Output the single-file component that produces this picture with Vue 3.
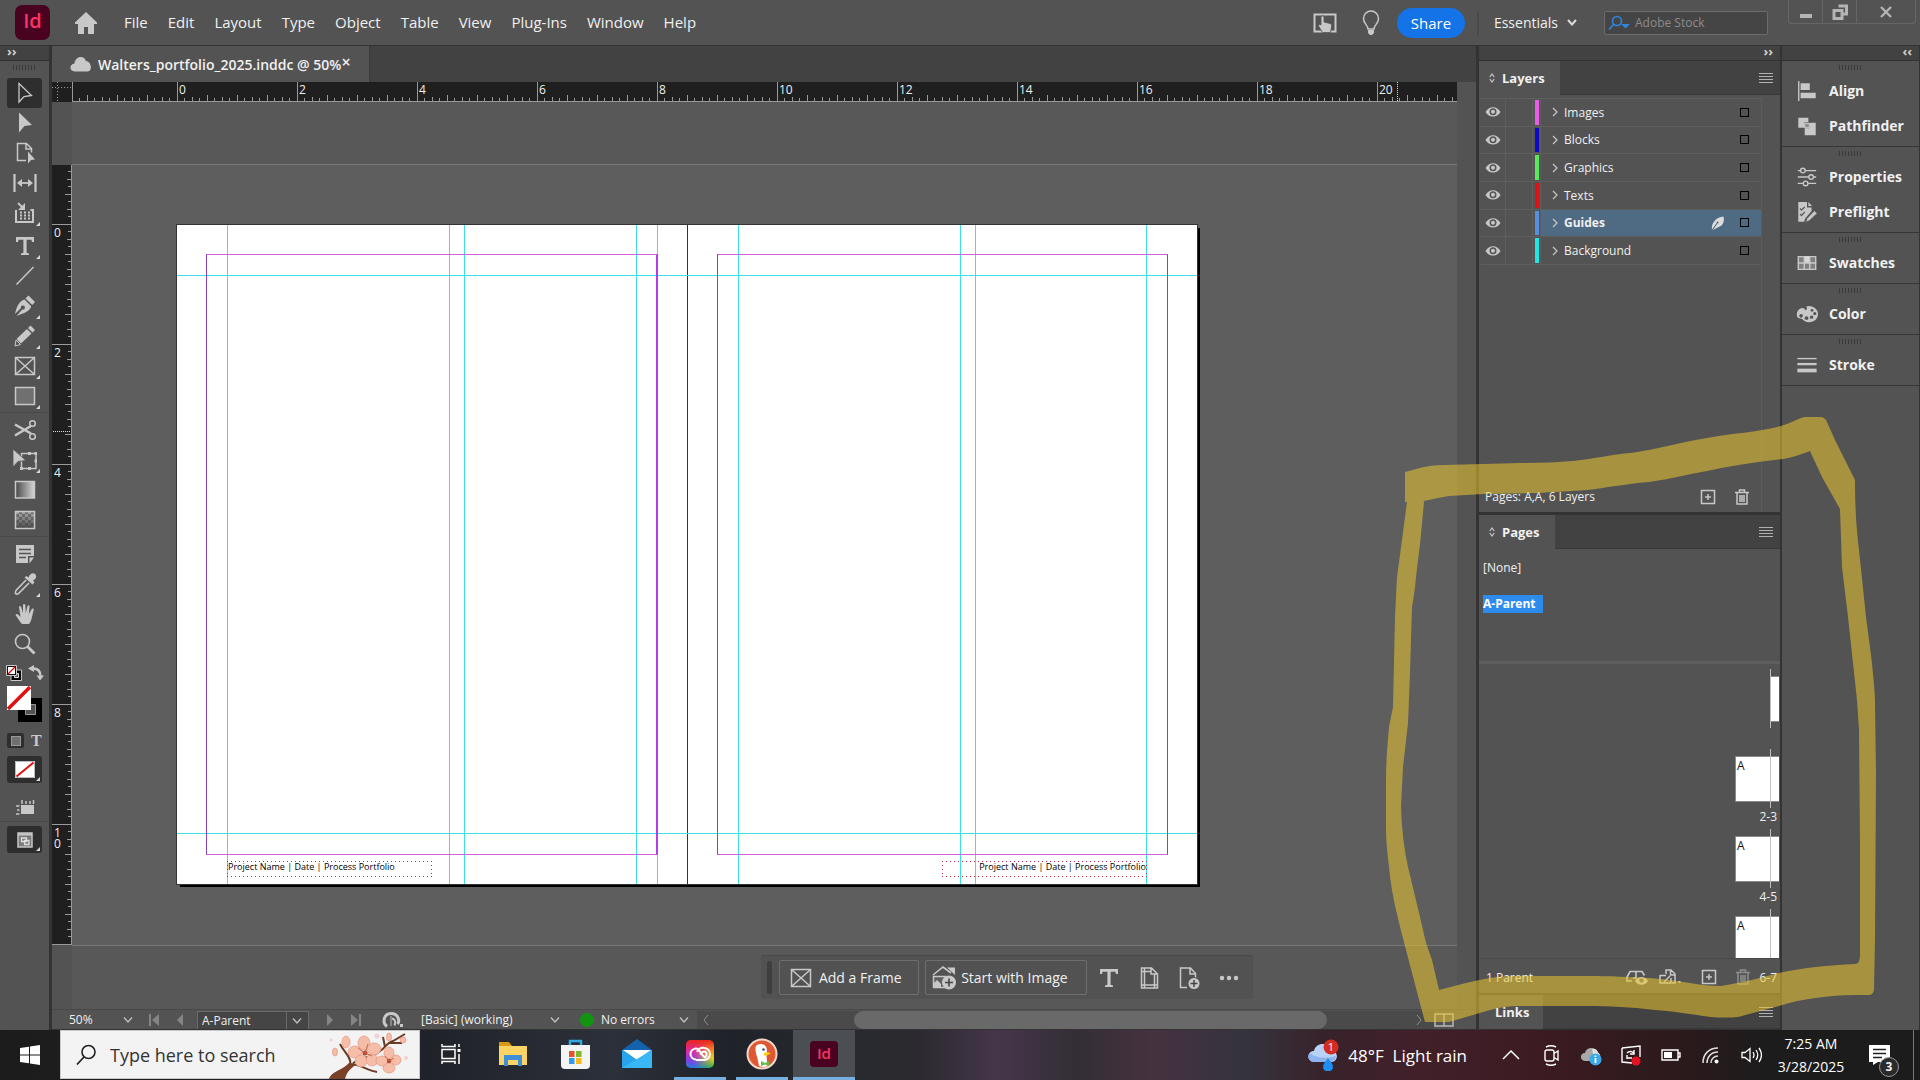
<template>
  <div class="app">
    <header class="menubar">
      <div class="id-logo">Id</div>
      <button class="plain home" aria-label="Home">
        <svg width="22" height="22" viewBox="0 0 22 22" v-html="icons.home"></svg>
      </button>
      <nav class="menus">
        <button v-for="m in menus" :key="m" class="plain">{{ m }}</button>
      </nav>
      <div class="menubar-right">
        <button class="plain" aria-label="Touch workspace">
          <svg width="24" height="22" viewBox="0 0 24 22" v-html="icons.touch"></svg>
        </button>
        <button class="plain bulb" aria-label="Learn">
          <svg width="18" height="26" viewBox="0 0 18 26" v-html="icons.bulb"></svg>
        </button>
        <button class="share">Share</button>
        <button class="plain essentials">
          Essentials
          <svg width="10" height="7" viewBox="0 0 10 7" v-html="icons.chevBold"></svg>
        </button>
        <label class="stock">
          <svg width="22" height="16" viewBox="0 0 22 16" v-html="icons.stockSearch"></svg>
          <input type="text" placeholder="Adobe Stock" aria-label="Adobe Stock" />
        </label>
        <div class="win-buttons">
          <button class="plain" aria-label="Minimize">
            <svg width="16" height="18" viewBox="0 0 16 18"><rect x="2" y="11" width="12" height="4" fill="#b4b4b4" /></svg>
          </button>
          <button class="plain" aria-label="Restore">
            <svg width="18" height="18" viewBox="0 0 18 18" v-html="icons.restore"></svg>
          </button>
          <button class="plain" aria-label="Close">
            <svg width="14" height="14" viewBox="0 0 14 14"><path d="M2 2l10 10M12 2L2 12" stroke="#b4b4b4" stroke-width="2.4" /></svg>
          </button>
        </div>
      </div>
    </header>

    <main class="workspace">
      <aside class="toolbar">
        <div class="dock-head left"><span>››</span></div>
        <div class="grip"></div>
        <div v-for="(group, gi) in toolGroups" :key="gi" class="tool-group" :class="{ line: gi > 1 }">
          <button v-for="t in group" :key="t.icon" class="tool" :class="{ active: t.active }" :aria-label="t.label">
            <svg width="24" height="24" viewBox="0 0 24 24" v-html="icons[t.icon]"></svg>
            <i v-if="t.more" class="more"></i>
          </button>
        </div>
        <div class="swatch-mini">
          <button class="plain" aria-label="Default fill and stroke">
            <svg width="16" height="16" viewBox="0 0 16 16" v-html="icons.defaults"></svg>
          </button>
          <button class="plain" aria-label="Swap">
            <svg width="16" height="16" viewBox="0 0 16 16" v-html="icons.swap"></svg>
          </button>
        </div>
        <svg class="fill-stroke" width="35" height="36" viewBox="0 0 35 36" v-html="icons.fillStroke"></svg>
        <div class="affects">
          <button class="plain box" aria-label="Formatting affects container"><i></i></button>
          <button class="plain serif" aria-label="Formatting affects text">T</button>
        </div>
        <button class="tool boxed" aria-label="Apply none">
          <svg width="20" height="17" viewBox="0 0 20 17" v-html="icons.none"></svg>
          <i class="more"></i>
        </button>
        <button class="tool spaced" aria-label="View options">
          <svg width="20" height="18" viewBox="0 0 20 18" v-html="icons.viewOpt"></svg>
        </button>
        <div class="tool-line"></div>
        <button class="tool boxed" aria-label="Screen mode">
          <svg width="16" height="16" viewBox="0 0 16 16" v-html="icons.screen"></svg>
          <i class="more"></i>
        </button>
      </aside>

      <section class="document">
        <div class="tabs">
          <div class="tab">
            <svg width="22" height="16" viewBox="0 0 22 16" v-html="icons.cloud"></svg>
            <span>Walters_portfolio_2025.inddc @ 50%</span>
            <button class="plain close" aria-label="Close tab">×</button>
          </div>
        </div>

        <div class="ruler-row">
          <svg class="corner" width="20" height="20" viewBox="0 0 20 20">
            <path d="M0 5.5H20M5.5 0V20" stroke="#999" stroke-dasharray="1 2" />
          </svg>
          <svg class="hruler" height="20">
            <line v-for="t in hTicks" :key="t.pos" :x1="t.pos" :x2="t.pos" :y1="19 - t.len" y2="19" class="tick" />
            <line x1="0" x2="100%" y1="19.5" y2="19.5" class="tick" />
            <line x1="1325.5" x2="1325.5" y1="0" y2="19" class="cursor" />
            <text v-for="l in hLabels" :key="l.text" :x="l.pos" y="12" class="num">{{ l.text }}</text>
          </svg>
        </div>

        <div class="stage">
          <div class="vside">
            <svg class="vruler" width="20">
              <line v-for="t in vTicks" :key="t.pos" :y1="t.pos" :y2="t.pos" :x1="19 - t.len" x2="19" class="tick" />
              <line y1="0" y2="100%" x1="19.5" x2="19.5" class="tick" />
              <line y1="266.5" y2="266.5" x1="1" x2="19" class="cursor" />
              <template v-for="l in vLabels" :key="l.text">
                <text v-for="(d, i) in l.text" :key="i" x="2" :y="l.pos + i * 11" class="num">{{ d }}</text>
              </template>
            </svg>
          </div>
          <div class="canvas">
            <div class="pasteboard"></div>
            <div class="spread">
              <div class="spine"></div>
              <div v-for="x in vGuides" :key="x" class="guide v" :style="{ left: x + 'px' }"></div>
              <div v-for="y in hGuides" :key="y" class="guide h" :style="{ top: y + 'px' }"></div>
              <div class="margin left-page"></div>
              <div class="margin right-page"></div>
              <div class="frame lf">Project Name | Date | Process Portfolio</div>
              <div class="frame rf">Project Name | Date | Process Portfolio</div>
            </div>
            <div class="context-bar">
              <i class="handle"></i>
              <button class="ctx">
                <svg width="24" height="24" viewBox="0 0 24 24" v-html="icons.frame"></svg>
                Add a Frame
              </button>
              <button class="ctx second">
                <svg width="24" height="24" viewBox="0 0 24 24" v-html="icons.startImage"></svg>
                Start with Image
              </button>
              <button v-for="c in ctxIcons" :key="c.icon" class="plain ctx-icon" :aria-label="c.label">
                <svg width="24" height="24" viewBox="0 0 24 24" v-html="icons[c.icon]"></svg>
              </button>
            </div>
          </div>
          <div class="vscroll"></div>
        </div>

        <footer class="status">
          <div class="drop zoom">
            <select aria-label="Zoom"><option>50%</option></select>
            <svg width="10" height="6" viewBox="0 0 10 6" v-html="icons.chev"></svg>
          </div>
          <div class="pager">
            <button class="plain" aria-label="First page"><svg width="12" height="12" viewBox="0 0 12 12"><path d="M1 0h2v12H1zM11 0v12L4 6z" fill="#858585" /></svg></button>
            <button class="plain" aria-label="Previous page"><svg width="12" height="12" viewBox="0 0 12 12"><path d="M9 0v12L3 6z" fill="#858585" /></svg></button>
          </div>
          <div class="drop page-select">
            <select aria-label="Page"><option>A-Parent</option></select>
            <svg width="10" height="6" viewBox="0 0 10 6" v-html="icons.chev"></svg>
          </div>
          <div class="pager next">
            <button class="plain" aria-label="Next page"><svg width="12" height="12" viewBox="0 0 12 12"><path d="M3 0v12l6-6z" fill="#858585" /></svg></button>
            <button class="plain" aria-label="Last page"><svg width="12" height="12" viewBox="0 0 12 12"><path d="M9 0h2v12H9zM1 0v12l7-6z" fill="#858585" /></svg></button>
          </div>
          <button class="plain pf" aria-label="Open"><svg width="24" height="16" viewBox="0 0 24 16" v-html="icons.openRecent"></svg></button>
          <div class="drop profile">
            <select aria-label="Preflight profile"><option>[Basic] (working)</option></select>
            <svg width="10" height="6" viewBox="0 0 10 6" v-html="icons.chev"></svg>
          </div>
          <div class="drop errors">
            <i class="dot"></i>
            <select aria-label="Errors"><option>No errors</option></select>
            <svg width="10" height="6" viewBox="0 0 10 6" v-html="icons.chev"></svg>
          </div>
          <div class="hscroll">
            <svg width="6" height="12" viewBox="0 0 6 12"><path d="M5 1L1 6l4 5" fill="none" stroke="#909090" /></svg>
            <div class="track"><div class="thumb"></div></div>
            <svg width="6" height="12" viewBox="0 0 6 12"><path d="M1 1l4 5-4 5" fill="none" stroke="#909090" /></svg>
          </div>
          <button class="plain split" aria-label="Split layout">
            <svg width="20" height="14" viewBox="0 0 20 14"><path d="M1 1h18v12H1zM10 1v12" fill="none" stroke="#b8b8b8" stroke-width="1.5" /></svg>
          </button>
        </footer>
      </section>

      <aside class="panels">
        <div class="dock-head"><span>››</span></div>
        <section class="panel layers">
          <div class="panel-tabs">
            <div class="panel-tab"><svg width="6" height="10" viewBox="0 0 6 10" v-html="icons.updown"></svg>Layers</div>
            <button class="plain burger" aria-label="Layers menu"><svg width="14" height="10" viewBox="0 0 14 10" v-html="icons.burger"></svg></button>
          </div>
          <div class="layers-body">
            <ul class="layer-list">
              <li v-for="l in layers" :key="l.name" :class="{ selected: l.selected }">
                <button class="plain eye" aria-label="Toggle visibility"><svg width="16" height="12" viewBox="0 0 16 12" v-html="icons.eye"></svg></button>
                <span class="lock"></span>
                <span class="colour"><i :style="{ background: l.color }"></i></span>
                <span class="layer-name">
                  <svg width="6" height="10" viewBox="0 0 6 10"><path d="M1 1l4 4-4 4" fill="none" stroke="#c8c8c8" stroke-width="1.2" /></svg>
                  <span>{{ l.name }}</span>
                  <svg v-if="l.selected" class="pen" width="16" height="16" viewBox="0 0 16 16" v-html="icons.nib"></svg>
                  <i class="square"></i>
                </span>
              </li>
            </ul>
            <div class="layer-space"></div>
            <div class="panel-foot">
              <span>Pages: A,A, 6 Layers</span>
              <button class="plain" aria-label="New layer"><svg width="16" height="16" viewBox="0 0 16 16" v-html="icons.plusBox"></svg></button>
              <button class="plain" aria-label="Delete layer"><svg width="16" height="16" viewBox="0 0 16 16" v-html="icons.trash"></svg></button>
            </div>
          </div>
        </section>

        <section class="panel pages">
          <div class="panel-tabs">
            <div class="panel-tab"><svg width="6" height="10" viewBox="0 0 6 10" v-html="icons.updown"></svg>Pages</div>
            <button class="plain burger" aria-label="Pages menu"><svg width="14" height="10" viewBox="0 0 14 10" v-html="icons.burger"></svg></button>
          </div>
          <div class="parents">
            <div>[None]</div>
            <div><b>A-Parent</b></div>
          </div>
          <div class="thumbs">
            <div v-for="p in pages" :key="p.label" class="thumb-row">
              <div class="thumb-box">
                <div class="sheet" :class="{ single: p.single }"><span v-if="!p.single">A</span></div>
              </div>
              <span class="thumb-label">{{ p.label }}</span>
            </div>
          </div>
          <div class="pages-foot">
            <span>1 Parent</span>
            <button class="plain" aria-label="Page view"><svg width="24" height="16" viewBox="0 0 24 16" v-html="icons.pageView"></svg></button>
            <button class="plain" aria-label="Edit page size"><svg width="24" height="16" viewBox="0 0 24 16" v-html="icons.pageSize"></svg></button>
            <button class="plain" aria-label="New page"><svg width="16" height="16" viewBox="0 0 16 16" v-html="icons.plusBox"></svg></button>
            <button class="plain dim" aria-label="Delete page"><svg width="16" height="16" viewBox="0 0 16 16" v-html="icons.trash"></svg></button>
            <span class="last">6-7</span>
          </div>
        </section>

        <section class="panel links">
          <div class="panel-tabs">
            <div class="panel-tab">Links</div>
            <button class="plain burger" aria-label="Links menu"><svg width="14" height="10" viewBox="0 0 14 10" v-html="icons.burger"></svg></button>
          </div>
        </section>
      </aside>

      <aside class="dock">
        <div class="dock-head"><span>‹‹</span></div>
        <div v-for="(g, i) in dockGroups" :key="i" class="dock-group">
          <div class="grip"></div>
          <button v-for="d in g" :key="d.name" class="plain dock-item">
            <svg width="24" height="24" viewBox="0 0 24 24" v-html="icons[d.icon]"></svg>
            {{ d.name }}
          </button>
        </div>
      </aside>

      <svg class="marker" width="540" height="624" viewBox="1380 400 540 624">
        <path :d="markerPath" fill="#ecc92f" fill-opacity="0.55" fill-rule="evenodd" />
      </svg>
    </main>

    <footer class="taskbar">
      <button class="plain start" aria-label="Start">
        <svg width="20" height="20" viewBox="0 0 20 20"><path d="M0 3l9-1.300V9.500H0zM10 1.500L20 0v9.500H10zM0 10.500h9v7.800L0 17zM10 10.500h10V20l-10-1.500z" fill="#fff" /></svg>
      </button>
      <label class="search">
        <svg width="22" height="22" viewBox="0 0 22 22"><circle cx="13.500" cy="8" r="6.500" fill="none" stroke="#222" stroke-width="1.600" /><path d="M9 13l-7 7.500" stroke="#222" stroke-width="1.800" /></svg>
        <input type="text" placeholder="Type here to search" aria-label="Type here to search" />
        <svg class="blossom" width="88" height="48" viewBox="0 0 88 48" v-html="icons.blossom"></svg>
      </label>
      <button v-for="t in taskApps" :key="t.icon" class="plain app-btn" :class="[t.state, t.icon]" :aria-label="t.label">
        <svg width="32" height="32" viewBox="0 0 32 32" v-html="icons[t.icon]"></svg>
        <span v-if="t.icon === 'tId'" class="id-logo small">Id</span>
      </button>
      <div class="tray">
        <button class="plain weather">
          <svg width="32" height="32" viewBox="0 0 32 32" v-html="icons.weather"></svg>
          48°F&nbsp; Light rain
        </button>
        <button v-for="t in trayIcons" :key="t" class="plain tray-icon" :aria-label="t">
          <svg width="22" height="22" viewBox="0 0 22 22" v-html="icons[t]"></svg>
        </button>
        <button class="plain clock"><span>7:25 AM</span><span>3/28/2025</span></button>
        <button class="plain notif" aria-label="Notifications">
          <svg width="22" height="20" viewBox="0 0 22 20"><path d="M0 0h21v17h-12l-5 3v-3H0z" fill="#fff" /><path d="M4 4.500h13M4 8.500h13M4 12.500h9" stroke="#222" stroke-width="1.500" /></svg>
          <span class="badge">3</span>
        </button>
      </div>
    </footer>
  </div>
</template>

<script setup>
const menus = ['File', 'Edit', 'Layout', 'Type', 'Object', 'Table', 'View', 'Plug-Ins', 'Window', 'Help'];

const toolGroups = [
  [
    { icon: 'select', label: 'Selection', active: true },
    { icon: 'direct', label: 'Direct selection' },
    { icon: 'page', label: 'Page' },
    { icon: 'gap', label: 'Gap' },
    { icon: 'collector', label: 'Content collector', more: true },
  ],
  [
    { icon: 'type', label: 'Type', more: true },
    { icon: 'line', label: 'Line' },
    { icon: 'pen', label: 'Pen', more: true },
    { icon: 'pencil', label: 'Pencil', more: true },
    { icon: 'frame', label: 'Rectangle frame', more: true },
    { icon: 'rect', label: 'Rectangle', more: true },
  ],
  [
    { icon: 'scissors', label: 'Scissors' },
    { icon: 'transform', label: 'Free transform', more: true },
    { icon: 'gradient', label: 'Gradient swatch' },
    { icon: 'feather', label: 'Gradient feather' },
  ],
  [
    { icon: 'note', label: 'Note' },
    { icon: 'dropper', label: 'Eyedropper', more: true },
    { icon: 'hand', label: 'Hand' },
    { icon: 'zoom', label: 'Zoom' },
  ],
];

const layers = [
  { name: 'Images', color: '#e75de5' },
  { name: 'Blocks', color: '#0a0ac8' },
  { name: 'Graphics', color: '#5be85b' },
  { name: 'Texts', color: '#d81414' },
  { name: 'Guides', color: '#5590e0', selected: true },
  { name: 'Background', color: '#22e6e6' },
];

const pages = [
  { label: '', single: true },
  { label: '2-3' },
  { label: '4-5' },
  { label: ' ' },
];

const dockGroups = [
  [{ name: 'Align', icon: 'align' }, { name: 'Pathfinder', icon: 'pathfinder' }],
  [{ name: 'Properties', icon: 'properties' }, { name: 'Preflight', icon: 'preflight' }],
  [{ name: 'Swatches', icon: 'swatches' }],
  [{ name: 'Color', icon: 'palette' }],
  [{ name: 'Stroke', icon: 'stroke' }],
];

const ctxIcons = [
  { icon: 'type', label: 'Type' },
  { icon: 'docMargins', label: 'Adjust layout' },
  { icon: 'docPlus', label: 'Add page' },
  { icon: 'dots', label: 'More options' },
];

const taskApps = [
  { icon: 'tView', label: 'Task view' },
  { icon: 'tFolder', label: 'File Explorer' },
  { icon: 'tStore', label: 'Store' },
  { icon: 'tMail', label: 'Mail' },
  { icon: 'tCloud', label: 'Creative Cloud', state: 'open' },
  { icon: 'tDuck', label: 'DuckDuckGo', state: 'open' },
  { icon: 'tId', label: 'InDesign', state: 'current' },
];

const trayIcons = ['trayUp', 'trayCam', 'trayDrive', 'trayPc', 'trayBattery', 'trayWifi', 'traySound'];

// rulers: 60px to the inch, one tick every eighth
const makeTicks = (origin, from, to) => {
  const ticks = [];
  for (let n = from; n <= to; n++) {
    const len = n % 16 === 0 ? 19 : n % 4 === 0 ? 6 : n % 2 === 0 ? 4 : 3;
    ticks.push({ pos: Math.floor(origin + n * 7.5) + 0.5, len });
  }
  return ticks;
};
const hTicks = [...makeTicks(105, -14, 240), { pos: 0.5, len: 19 }];
const vTicks = makeTicks(59, -7, 96);
const hLabels = [0, 2, 4, 6, 8, 10, 12, 14, 16, 18, 20].map((n) => ({ text: n, pos: 107 + n * 60 }));
const vLabels = [0, 2, 4, 6, 8, 10].map((n) => ({ text: String(n), pos: 72 + n * 60 }));

const vGuides = [50, 272, 287, 459, 480, 561, 783, 798, 969];
const hGuides = [50, 608];

const markerPath =
  'M1405 472L1420 468Q1430 465 1445 465L1521 463Q1550 463 1573 461C1595 459 1612 454 1631 453C1660 449 1680 442 1707 438C1735 433 1760 432 1781 426C1792 423 1798 418 1805 417L1820 417Q1825 417 1827 422L1835 440L1855 480C1855 520 1858 540 1859 550L1866 617L1871 655Q1875 690 1875 703L1876 773L1875 940L1874 990Q1873 995 1869 995L1855 995C1830 995 1800 999 1779 1006L1738 1017Q1725 1018 1711 1017C1690 1014 1670 1011 1655 1010C1630 1007 1610 1006 1587 1006L1518 1006Q1505 1006 1490 1010L1449 1022L1425 1022L1421 1007L1406 950C1400 925 1392 900 1389 867C1387 850 1386 840 1386 827L1386 780C1386 760 1388 740 1389 727L1393 707L1395 617L1397 577L1402 540L1407 502L1405 502Z' +
  'M1424 501Q1436 498 1449 496L1483 494L1535 493C1555 492 1570 491 1587 490C1605 488 1625 484 1649 482C1670 479 1690 474 1707 471Q1740 464 1783 459Q1798 456 1810 451L1822 477L1840 509L1842 567L1848 617L1857 700L1859 730L1860 840L1860 955Q1860 964 1855 964C1830 965 1800 968 1779 973C1760 978 1745 982 1721 986C1710 986 1700 985 1690 983C1675 981 1665 979 1649 978C1630 977 1610 976 1587 976L1535 976Q1510 975 1490 978Q1478 980 1466 983L1439 990L1432 960L1426 943L1420 917L1408 867Q1402 840 1401 807L1403 767L1408 723L1410 673L1412 607Q1415 590 1416 577Q1421 540 1424 501Z';

const G = '#c8c8c8';
const icons = {
  home: `<path d="M11 0L0 10.500V12h3v10h6v-7h4v7h6V12h3v-1.500z" fill="${G}"/>`,
  touch: `<path d="M1.500 2.500h21v17h-21z" fill="none" stroke="${G}" stroke-width="2"/><path d="M8 5c0-1.500 3-1.500 3 0v5l6 1.500c1.500.5 1.500 1 1.500 3l-1 6H9.500l-4-6.500c-.5-1.500 1.500-2 2.500-1z" fill="${G}" stroke="#535353" stroke-width=".8"/>`,
  bulb: `<path d="M6 19c0-4-4.500-5-4.500-10.500a7.500 7.500 0 0 1 15 0C16.500 14 12 15 12 19z" fill="none" stroke="${G}" stroke-width="1.500"/><path d="M6 20h6v3l-2 2H8l-2-2z" fill="${G}"/>`,
  chevBold: `<path d="M1 1l4 4.500L9 1" fill="none" stroke="#dcdcdc" stroke-width="2"/>`,
  chev: `<path d="M1 0.500l4 4.500 4-4.500" fill="none" stroke="#c0c0c0" stroke-width="1.300"/>`,
  stockSearch: `<circle cx="9" cy="6" r="4.500" fill="none" stroke="#2f86e0" stroke-width="1.600"/><path d="M6 9l-5 5.500" stroke="#2f86e0" stroke-width="1.800"/><path d="M13 9h9l-4.500 4.500z" fill="#2f86e0"/>`,
  restore: `<path d="M7.500 3h8v8h-3M3 7.500h8v8H3z" fill="none" stroke="#b4b4b4" stroke-width="3"/>`,
  cloud: `<path d="M5 15.500C-1 15.500-1 8 4.500 7.500 5 0 14-1.500 16 5c5 0 7.500 10.500 1 10.500z" fill="${G}"/>`,
  select: `<path d="M6 2.500v18.500l5-5.500 7.500-1z" fill="none" stroke="${G}" stroke-width="1.300"/>`,
  direct: `<path d="M6 1.500v20l5.500-6.500 7.500-1z" fill="${G}"/>`,
  page: `<path d="M13 19.500H4.500v-17h9l5 5v4M13 2.500v5.500h5" fill="none" stroke="${G}" stroke-width="1.500"/><path d="M15 10.500v12l3-3.500 4-.5z" fill="${G}"/>`,
  gap: `<path d="M1.500 3v18M22.500 3v18" stroke="${G}" stroke-width="2.200"/><path d="M7 12h10" stroke="${G}" stroke-width="1.800"/><path d="M4 12l5-4v8zM20 12l-5-4v8z" fill="${G}"/>`,
  collector: `<path d="M5 2l5 5" stroke="${G}" stroke-width="1.800"/><path d="M12 2v7H5z" fill="${G}"/><path d="M3 9v12h17V9h-2.500" fill="none" stroke="${G}" stroke-width="2"/><path d="M7 11.500h10M7 14.500h10M7 17.500h10" stroke="${G}" stroke-width="2" stroke-dasharray="2 2"/>`,
  type: `<path d="M3 3h18v5h-2l-.6-2.200H13.600v13l2.400.7V21H8v-1.500l2.400-.7v-13H5.600L5 8H3z" fill="${G}"/>`,
  line: `<path d="M3.500 20.500L20.500 3" stroke="${G}" stroke-width="1.500"/>`,
  pen: `<path d="M15.500 1.500l6.500 6.500-2.800 3-6.700-6.500z" fill="${G}"/><path d="M11.500 5.500l6.700 6.700c-1.500 5.800-8 6.800-14.700 9.800l5.800-6.600a2 2 0 1 0-1.300-1.300L2 20C3.500 13 6 7 11.500 5.500z" fill="${G}"/>`,
  nib: `<path d="M14.500 1.500c.8 4 .5 6.500-2 9L4 15l4.500-6.500a1 1 0 1 0-.8-.5L3 14.500c-.5-3 0-5.500 2.500-8.500C8 3 11 1.800 14.500 1.500z" fill="#dcdcdc"/>`,
  pencil: `<path d="M17.500 1.500l4.500 4.500-2.500 2.500L15 4zM14 5l4.500 4.500L8 19.500 3.500 15z" fill="${G}"/><path d="M3 16l4.500 4.500L2 22z" fill="none" stroke="${G}"/>`,
  frame: `<path d="M2.500 3.500h19v17h-19zM2.500 3.500l19 17M21.500 3.500l-19 17" fill="none" stroke="${G}" stroke-width="1.500"/>`,
  rect: `<path d="M2.500 3.500h19v17h-19z" fill="#707070" stroke="${G}" stroke-width="1.500"/>`,
  scissors: `<path d="M2 6.500l16 9M2 17.500L18 8" stroke="${G}" stroke-width="2.500"/><circle cx="19.500" cy="5.500" r="2.800" fill="none" stroke="${G}" stroke-width="1.500"/><circle cx="19.500" cy="18.500" r="2.800" fill="none" stroke="${G}" stroke-width="1.500"/>`,
  transform: `<path d="M8.500 5.500H23v15H8.500z" fill="none" stroke="${G}" stroke-width="1.500"/><path d="M15 4h3v3h-3zM15 19h3v3h-3zM21.500 4H24v3h-2.500zM21.500 11.500H24v3h-2.500zM7 19h3v3H7z" fill="${G}"/><path d="M0 1v18l5-5.500 8-1z" fill="${G}" stroke="#535353" stroke-width=".8"/>`,
  gradient: `<defs><linearGradient id="grad"><stop offset="0" stop-color="#484848"/><stop offset="1" stop-color="#d8d8d8"/></linearGradient></defs><path d="M2.500 3.500h19v16.500h-19z" fill="url(#grad)" stroke="${G}" stroke-width="1.500"/>`,
  feather: `<defs><pattern id="chk" width="6" height="6" patternUnits="userSpaceOnUse"><path d="M0 0h3v3H0zM3 3h3v3H3z" fill="#a8a8a8"/></pattern><linearGradient id="fd" x2="0" y2="1"><stop offset="0" stop-color="#484848" stop-opacity="0"/><stop offset="1" stop-color="#404040" stop-opacity=".9"/></linearGradient></defs><path d="M2.500 3.500h19v17h-19z" fill="#757575"/><path d="M2.500 3.500h19v17h-19z" fill="url(#chk)"/><path d="M2.500 3.500h19v17h-19z" fill="url(#fd)" stroke="${G}" stroke-width="1.500"/>`,
  note: `<path d="M3 3h18v11h-6v7H3z" fill="${G}"/><path d="M16.500 21.500v-6H21z" fill="${G}"/><path d="M6 7.500h12M6 11.500h12M6 15.500h7" stroke="#535353" stroke-width="1.500"/>`,
  dropper: `<path d="M13 8L3 18.500c-1.500 3 0 4.500 2.500 3L16 11" fill="none" stroke="${G}" stroke-width="1.600"/><path d="M11.500 5.500l2-1.500 2 1.500C17 1.500 20 .5 22 2s1.500 5-2 6.500l1.500 2-2 2z" fill="${G}"/>`,
  hand: `<path d="M9 22c-2-2-4-6-6.500-9 .5-1.500 2-1.500 3 0l2 2L6 5c.3-1.500 1.800-1.500 2.200 0L10 11V3c.3-1.500 2-1.500 2.300 0l.5 8L14.500 4c.5-1.300 2-1 2.100.3L15.800 12l3-5c1-1 2.200-.3 1.900 1C19.500 12 18.500 20 16 22z" fill="${G}"/>`,
  zoom: `<circle cx="9.500" cy="9.500" r="7" fill="none" stroke="${G}" stroke-width="1.600"/><path d="M14.500 14.500l7 7" stroke="${G}" stroke-width="2.800"/>`,
  defaults: `<path d="M5 5h10.500v10.500H5z" fill="#000" stroke="${G}"/><path d="M8.500 8.500h4v4h-4z" fill="#535353" stroke="#ddd"/><path d="M.5.500h10v10H.5z" fill="#111" stroke="${G}"/><path d="M2 2h7v7H2z" fill="#fff"/><path d="M2 9l7-7" stroke="#e00000" stroke-width="1.300"/>`,
  swap: `<path d="M5 3.500c5 0 7.500 3 7.500 8" fill="none" stroke="${G}" stroke-width="2.500"/><path d="M0 3.500L6 0v7zM8.500 10.500h7.500l-4 5z" fill="${G}"/>`,
  fillStroke: `<path d="M11 12h24v24H11z" fill="#000"/><path d="M18.500 18.500h10v10h-10z" fill="#535353" stroke="#999"/><path d="M0 0h24v24H0z" fill="#fff"/><path d="M1 23L23 1" stroke="#e01010" stroke-width="3.500"/>`,
  none: `<path d="M0 0h20v17H0z" fill="#fff"/><path d="M.5.5h19v16H.5z" fill="none" stroke="#bbb"/><path d="M1.500 15.500l17-14" stroke="#e01010" stroke-width="2"/>`,
  viewOpt: `<path d="M6 8h13v9H6z" fill="${G}"/><path d="M7 3v4M11 4v3M15 4v3M18.500 3v4M1 9h3.500M2 13h2.500M1 17h3.500" stroke="${G}" stroke-width="1.500"/>`,
  screen: `<path d="M1 1h14v14H1z" fill="#7a7a7a" stroke="${G}" stroke-width="1.500"/><path d="M1 2.500h14" stroke="${G}" stroke-width="2"/><path d="M4.500 6h5v3.500h-5zM7.500 8.500h4.500v4H7.500z" fill="#7a7a7a" stroke="#e0e0e0" stroke-width="1.300"/>`,
  startImage: `<path d="M1 9l10-8 8 6" fill="none" stroke="${G}" stroke-width="1.600"/><path d="M15 1.500h8V9z" fill="${G}"/><path d="M1.500 10.500h12v11h-12z" fill="#606060" stroke="${G}" stroke-width="1.500"/><path d="M1 22v-4l4-4 4 4v4z" fill="${G}"/><circle cx="17" cy="16.500" r="7" fill="${G}"/><path d="M17 12.500v8M13 16.500h8" stroke="#444" stroke-width="1.600"/>`,
  docMargins: `<path d="M4.500 2h10l6 6v14h-16zM14 2v6h6M7.500 2v20M17.500 8v14M4.500 19h16M4.500 5.500h9" fill="none" stroke="${G}" stroke-width="1.500"/>`,
  docPlus: `<path d="M10 21.500H3.500V2h10l5 5.500v4M13 2v6h5.500" fill="none" stroke="${G}" stroke-width="1.500"/><circle cx="17" cy="17.500" r="5.500" fill="${G}"/><path d="M17 14v7M13.500 17.500h7" stroke="#444" stroke-width="1.500"/>`,
  dots: `<circle cx="5" cy="12" r="2.200" fill="${G}"/><circle cx="12" cy="12" r="2.200" fill="${G}"/><circle cx="19" cy="12" r="2.200" fill="${G}"/>`,
  openRecent: `<path d="M5 14.500C0 11 1.500 1.500 9 1.500S18 9 15.500 12" fill="none" stroke="${G}" stroke-width="3"/><path d="M9 4v10" stroke="#999" stroke-width="1.500"/><path d="M10 6.500c3 .5 4 3.500 2.500 7" fill="none" stroke="${G}" stroke-width="2"/><path d="M18 12h3v3h-3z" fill="${G}"/>`,
  updown: `<path d="M.8 4L3 1l2.200 3M.8 6L3 9l2.200-3" fill="none" stroke="${G}" stroke-width="1.200"/>`,
  burger: `<path d="M0 .5h14M0 3.500h14M0 6.500h14M0 9.500h14" stroke="#b0b0b0"/>`,
  eye: `<path d="M.5 6C4-.5 12-.5 15.500 6 12 12 4 12 .5 6z" fill="${G}"/><circle cx="8" cy="5.800" r="3.500" fill="#535353"/><circle cx="8" cy="5.800" r="2" fill="${G}"/>`,
  plusBox: `<path d="M1.500 1.500h13v13h-13zM8 5v6M5 8h6" fill="none" stroke="${G}" stroke-width="1.500"/>`,
  trash: `<path d="M1 3.500h14M5.500 3V1h5v2M3 4v11h10V4M6 6v7M8 6v7M10 6v7" fill="none" stroke="${G}" stroke-width="1.500"/>`,
  pageView: `<path d="M7 12H2V8l3-5.500h6V9H8M11 2.500h6l2.500 4" fill="none" stroke="${G}" stroke-width="1.600"/><path d="M10 12c3-5.500 10-5.500 13 0-3 5-10 5-13 0z" fill="${G}"/><circle cx="16.500" cy="11.500" r="2.200" fill="#6a6450"/>`,
  pageSize: `<path d="M7 5V1h5l4 4v9h-3M11.500 1v5H16M1 6.500h6M1 6v8h11V9M5 13l6-6" fill="none" stroke="${G}" stroke-width="1.500"/><path d="M19.500 12h2v2h-2z" fill="${G}"/>`,
  align: `<path d="M3 1v22" stroke="${G}" stroke-width="1.500"/><path d="M5 3.500h10v7.500H5zM5 14h16.500v6H5z" fill="${G}"/>`,
  pathfinder: `<path d="M2.500 3h11v5H9v6H2.500zM15 8.500h6.500V22h-12v-7.500H15z" fill="${G}"/><path d="M9.500 9h5v5h-5z" fill="#8c8c8c" stroke="#e0e0e0"/>`,
  properties: `<path d="M2 5h20M2 12h20M2 19h20" stroke="${G}" stroke-width="1.500"/><g fill="#535353" stroke="${G}" stroke-width="1.500"><circle cx="7.500" cy="5" r="2.500"/><circle cx="16.500" cy="12" r="2.500"/><circle cx="10.500" cy="19" r="2.500"/></g>`,
  preflight: `<path d="M2.500 1h9.500v6h5v4l-7 8-1 3.500H2.500zM13.500 1l4 4.500h-4z" fill="${G}"/><path d="M4.500 8l1.500 2 3.500-3.500M4.500 14l1.500 2L9.500 12" fill="none" stroke="#535353" stroke-width="1.300"/><path d="M20 10.500l3 3-8.500 8-4 1.500 1.500-4z" fill="${G}" stroke="#535353" stroke-width=".7"/>`,
  swatches: `<path d="M2.500 5h19v14h-19z" fill="#808080" stroke="${G}" stroke-width="1.500"/><path d="M9 5h6v7H9z" fill="#d8d8d8"/><path d="M2 12h20M9 5v14M15 5v14" stroke="${G}" stroke-width="1.500"/>`,
  palette: `<path d="M1 14C0 6 9 3 10 8c2-1 3-2.500 1-4C15 2 24 5 24 12c0 6-5 9-10 9C8 21 8 17 5 17c-2 0-4-1-4-3z" fill="${G}"/><g fill="#535353"><circle cx="5.500" cy="14" r="2"/><circle cx="11.500" cy="16.500" r="2"/><circle cx="17" cy="15.500" r="1.800"/><circle cx="20.500" cy="11.500" r="1.700"/><circle cx="17.500" cy="8" r="1.500"/></g>`,
  stroke: `<path d="M1.500 5h21" stroke="${G}" stroke-width="1.500"/><path d="M1.500 11h21" stroke="${G}" stroke-width="2.500"/><path d="M1.500 18h21" stroke="${G}" stroke-width="4"/>`,
  blossom: `<path d="M3 48c4-9 14-7 20-15 2-6-6-12-10-20M23 33c10 0 16 6 27 8M26 32C34 26 38 28 46 24M46 24C58 20 58 12 66 10l12-7M58 16L56 6M62 12h13" fill="none" stroke="#6d3a24" stroke-width="2"/><path d="M2 48c4-8 12-8 20-16l6 2c-4 4-8 6-10 14z" fill="#7a4028"/><g fill="#f6bda8" stroke="#e08e78" stroke-width=".6"><ellipse cx="37" cy="12" rx="6" ry="7"/><ellipse cx="28" cy="21" rx="7" ry="6"/><ellipse cx="34" cy="30" rx="6" ry="6"/><ellipse cx="45" cy="29" rx="6" ry="6"/><ellipse cx="47" cy="18" rx="7" ry="6"/><ellipse cx="62" cy="22" rx="5" ry="6"/><ellipse cx="55" cy="30" rx="6" ry="5"/><ellipse cx="62" cy="37" rx="6" ry="5"/><ellipse cx="69" cy="29" rx="5" ry="5"/><ellipse cx="19" cy="11" rx="4" ry="6"/><ellipse cx="8" cy="21" rx="2.500" ry="4"/><ellipse cx="62" cy="6" rx="2.500" ry="4"/><ellipse cx="76" cy="9" rx="3" ry="3"/></g><g fill="#b5432c"><circle cx="38" cy="22" r="2.500"/><circle cx="62" cy="30" r="2.200"/></g><path d="M38 22l-7-5M38 22l3-9M38 22l7 3M62 30l-4-5M62 30l5-3" stroke="#c86a40" stroke-width="1"/><g fill="#f6cfd0"><circle cx="50" cy="5" r="2.500"/><circle cx="4" cy="9" r="1.500"/><circle cx="79" cy="27" r="2"/></g>`,
  tView: `<g fill="none" stroke="#fff" stroke-width="1.500"><path d="M7 11.500h13v9H7zM7 6v2.500h13V6M7 26v-2.500h13V26M24 6v3M24 16v10"/></g><path d="M22.500 11h3v3h-3z" fill="#fff"/>`,
  tFolder: `<path d="M2 4h10l3 4h15v5H2z" fill="#d99a12"/><path d="M2 8h28v19H2z" fill="#fbd463"/><path d="M7 17h18v11h-4v-6H11v6H7z" fill="#3f8fd6"/>`,
  tStore: `<path d="M11 8V3h11v5" fill="none" stroke="#35a6e4" stroke-width="2.500"/><path d="M2 7h29v20q0 4-4 4H6q-4 0-4-4z" fill="#f4f4f4"/><path d="M10 13h5.500v6H10z" fill="#e8502a"/><path d="M17 13h5.500v6H17z" fill="#7fb92e"/><path d="M10 20h5.500v6H10z" fill="#2d9de8"/><path d="M17 20h5.500v6H17z" fill="#f8b71d"/>`,
  tMail: `<path d="M1 12L16 1l15 11v4H1z" fill="#1461ae"/><path d="M1 12h30v18H1z" fill="#1e9be6"/><path d="M2 12h28L16 22z" fill="#fff"/><path d="M1 12l15 10-15 8z" fill="#27a5ec"/><path d="M1 30L31 12v18z" fill="#39b7f5"/>`,
  tCloud: `<defs><linearGradient id="ccRight" x2="0" y2="1"><stop offset="0" stop-color="#e8241c"/><stop offset=".35" stop-color="#f58a1c"/><stop offset=".65" stop-color="#e8d21e"/><stop offset="1" stop-color="#2fb24c"/></linearGradient><linearGradient id="ccLeft" x2="0" y2="1"><stop offset="0" stop-color="#e8241c"/><stop offset=".4" stop-color="#e02aa8"/><stop offset=".7" stop-color="#8a3ce0"/><stop offset="1" stop-color="#2478e8"/></linearGradient><linearGradient id="ccFade"><stop offset=".3" stop-color="#fff"/><stop offset=".9" stop-color="#000"/></linearGradient><mask id="ccMask"><rect width="32" height="32" fill="url(#ccFade)"/></mask></defs><rect x="2" y="2" width="28" height="28" rx="5" fill="url(#ccRight)"/><rect x="2" y="2" width="28" height="28" rx="5" fill="url(#ccLeft)" mask="url(#ccMask)"/><path d="M12 21.500a5.500 5.500 0 0 1 0-11c4 0 5 7 9 9M20 10a6 6 0 0 1 0 12h-8M20 10c-3-1-6 1-7 4M20 19.500c3.500-.5 3.500-6 0-6-2 0-3 2-4 3" fill="none" stroke="#fff" stroke-width="2"/>`,
  tDuck: `<circle cx="16" cy="16" r="14.500" fill="#de5833" stroke="#f4d8cc" stroke-width="2"/><path d="M13 28C12 20 8 12 10 8c2-3 9-3 10.500 2 1 3 0 6 0 8l1 10q-4 2-8.500 0z" fill="#fff"/><path d="M18 15c4-2 8 0 6 1s-3 2-6 1.500z" fill="#fdd20a"/><circle cx="17.500" cy="11.500" r="1.300" fill="#2d4f8e"/><path d="M15 23l4 2 4-2v5l-4-1.500-4 1.500z" fill="#65bc46"/>`,
  tId: '',
  weather: `<path d="M7 23C-1 22 0 12 7 12 9 3 21 3 23 11c9 0 9 12 1 12z" fill="#b9d2f8"/><path d="M7 23C1 22 0 17 3 14c5 5 17 6 26 3-1 4-2 6-5 6z" fill="#8fb3ee"/><path d="M21 19c3 4 5 6.500 5 9a5 4.500 0 0 1-10 0c0-2.500 2-5 5-9z" fill="#1d8df2"/><circle cx="24" cy="8" r="7.500" fill="#d42c20"/><text x="24" y="12" font-size="11" fill="#fff" text-anchor="middle" font-family="Open Sans, sans-serif">1</text>`,
  trayUp: `<path d="M3 15l8-8 8 8" fill="none" stroke="#fff" stroke-width="1.500"/>`,
  trayCam: `<g fill="none" stroke="#fff" stroke-width="1.400"><rect x="5" y="6" width="9" height="11" rx="2"/><path d="M14 9.500l4-2.500v9l-4-2.500M6 3q5-2.500 10 0M6 20q5 2.500 10 0"/></g>`,
  trayDrive: `<path d="M5 17C-1 16 0 9 5 9c1-6 10-7 12-1 4 0 4 9 0 9z" fill="#a8a8a8"/><path d="M12 5c3-1 6 1 6 4 3 1 3 7 0 8l-4-3z" fill="#e0e0e0"/><circle cx="15.500" cy="15.500" r="6" fill="#3aa9ec"/><path d="M15.500 14v5M15.500 11.500v1.500" stroke="#fff" stroke-width="1.800"/>`,
  trayPc: `<path d="M2 4l18-2v11M12 19L2 18V4" fill="none" stroke="#fff" stroke-width="1.400"/><path d="M7 9c3-3 7-1 7 1M7 14h5M14 6v4h-4M7 15v-4" fill="none" stroke="#fff" stroke-width="1.400"/><circle cx="16" cy="17" r="4.500" fill="#e81123"/>`,
  trayBattery: `<path d="M2 6h16v10H2zM18.500 9H20v4h-1.500" fill="none" stroke="#fff" stroke-width="1.400"/><path d="M4 8h8v6H4z" fill="#fff"/>`,
  trayWifi: `<g fill="none" stroke="#fff" stroke-width="1.500"><path d="M3 19C3 10 9 4 18 4M7 19c0-6 4-11 11-11M11 19c0-4 3-7 7-7" opacity=".85"/></g><circle cx="16.500" cy="17.500" r="2" fill="#fff"/>`,
  traySound: `<path d="M2 8.500h3l5-4v13l-5-4H2z" fill="none" stroke="#fff" stroke-width="1.300"/><path d="M13 8q2 3 0 6M16 6q3.500 5 0 10M19 4q5 7 0 14" fill="none" stroke="#fff" stroke-width="1.300"/>`,
};
</script>

<style>
body {
  margin: 0;
  background: #535353;
}
</style>

<style scoped>
.app {
  display: flex;
  flex-direction: column;
  height: 100vh;
  min-height: 1080px;
  font-family: "Open Sans", "Noto Sans", sans-serif;
  font-size: 12px;
  color: #f0f0f0;
  overflow: hidden;
}

svg {
  display: block;
  flex: none;
}

.plain {
  background: none;
  border: 0;
  padding: 0;
  margin: 0;
  color: inherit;
  font: inherit;
  display: flex;
  align-items: center;
  cursor: pointer;
}

/* menu bar */
.menubar {
  display: flex;
  align-items: center;
  height: 45px;
  background: #535353;
  border-bottom: 1px solid #333;
  font-size: 14px;
  padding-left: 15px;
}

.id-logo {
  width: 35px;
  height: 35px;
  border-radius: 7px;
  background: #49021f;
  color: #ff3366;
  font-weight: 600;
  font-size: 20px;
  line-height: 32px;
  text-align: center;
}

.home {
  margin-left: 25px;
}

.menus {
  display: flex;
  gap: 20px;
  margin-left: 27px;
  padding-bottom: 2px;
  font-size: 15px;
}

.menubar-right {
  display: flex;
  align-items: center;
  margin-left: auto;
  height: 45px;
}

.bulb {
  margin-left: 25px;
}

.share {
  margin-left: 17px;
  width: 68px;
  height: 30px;
  border: 0;
  border-radius: 15px;
  background: #1473e6;
  color: #fff;
  font: 15px "Open Sans", sans-serif;
  padding: 0;
}

.essentials {
  margin-left: 12px;
  padding-left: 15px;
  border-left: 2px solid #4a4a4a;
  height: 24px;
  gap: 9px;
}

.stock {
  display: flex;
  align-items: center;
  margin-left: 27px;
  width: 156px;
  height: 22px;
  padding: 0 3px;
  gap: 5px;
  background: #454545;
  border: 1px solid #6c6c6c;
  border-radius: 2px;
}

.stock input {
  width: 110px;
  border: 0;
  padding: 0;
  background: none;
  color: #ddd;
  font: 12px "Open Sans", sans-serif;
}

.stock input::placeholder {
  color: #8c8c8c;
  opacity: 1;
}

.win-buttons {
  display: flex;
  align-self: flex-start;
  margin-left: 20px;
  margin-right: 4px;
  border: 1px solid #666;
  border-top: 0;
  border-radius: 0 0 4px 4px;
}

.win-buttons button {
  width: 34px;
  height: 23px;
  justify-content: center;
  border-right: 1px solid #666;
}

.win-buttons button:last-child {
  width: 58px;
  border: 0;
}

/* workspace */
.workspace {
  position: relative;
  display: flex;
  flex: 1;
  min-height: 0;
  background: #333;
}

.dock-head {
  height: 14px;
  background: #424242;
  border-bottom: 1px solid #333;
  font-size: 13px;
  font-weight: 700;
  line-height: 11px;
  color: #d0d0d0;
  text-align: right;
  padding: 0 7px;
}

.dock-head.left {
  text-align: left;
}

.grip {
  height: 5px;
  width: 24px;
  margin: 4px auto 3px;
  background: repeating-linear-gradient(90deg, #3a3a3a 0 1px, #535353 1px 3px);
}

.toolbar {
  width: 49px;
  margin-right: 3px;
  background: #535353;
  display: flex;
  flex-direction: column;
}

.toolbar .grip {
  margin-bottom: 5px;
}

.tool-group {
  margin-top: 3px;
}

.tool-group.line {
  border-top: 1px solid #494949;
  margin-top: 1px;
  padding-top: 2px;
}

.tool {
  position: relative;
  display: flex;
  align-items: center;
  justify-content: center;
  width: 35px;
  height: 30px;
  margin-left: 7px;
  padding: 0;
  background: none;
  border: 0;
  border-radius: 3px;
}

.tool.active {
  background: #2e2e2e;
}

.tool.boxed {
  background: #2e2e2e;
  height: 27px;
}

.tool.spaced {
  margin-top: 8px;
}

.tool-line {
  border-top: 1px solid #494949;
  margin: 0 0 4px;
}

.more {
  position: absolute;
  right: 2px;
  bottom: 2px;
  border-left: 4px solid transparent;
  border-bottom: 4px solid #d8d8d8;
}

.swatch-mini {
  display: flex;
  justify-content: space-between;
  align-items: flex-start;
  margin: 6px 5px 0 6px;
  height: 21px;
}

.fill-stroke {
  margin: 0 0 0 7px;
}

.affects {
  display: flex;
  gap: 7px;
  align-items: center;
  margin: 11px 0 8px 7px;
}

.affects .box {
  width: 17px;
  height: 15px;
  background: #2e2e2e;
  border-radius: 2px;
  justify-content: center;
}

.affects .box i {
  width: 8px;
  height: 8px;
  background: #707070;
  border: 1px solid #999;
}

.affects .serif {
  font: bold 16px/15px "Liberation Serif", serif;
  color: #c8c8c8;
}

/* document */
.document {
  flex: 1;
  min-width: 0;
  display: flex;
  flex-direction: column;
  background: #535353;
  margin-right: 3px;
}

.tabs {
  height: 36px;
  background: #424242;
  display: flex;
}

.tab {
  display: flex;
  align-items: center;
  padding: 0 18px;
  background: #535353;
  font-size: 14px;
  font-weight: 600;
  border-right: 1px solid #3a3a3a;
}

.tab span {
  margin-left: 6px;
}

.close {
  font-size: 16px;
  line-height: 14px;
  padding-bottom: 4px;
}

.ruler-row {
  display: flex;
  height: 20px;
  padding-right: 19px;
}

.corner,
.hruler,
.vruler {
  background: #1f1f1f;
}

.hruler {
  flex: 1;
  min-width: 0;
  width: 0;
}

.tick {
  stroke: #9a9a9a;
  shape-rendering: crispEdges;
}

.cursor {
  stroke: #ddd;
  stroke-dasharray: 1 1;
}

.num {
  font: 12px "Open Sans", sans-serif;
  fill: #f0f0f0;
}

.stage {
  flex: 1;
  display: flex;
  min-height: 0;
}

.vside {
  width: 20px;
  padding: 63px 0 64px;
  display: flex;
}

.vruler {
  height: 100%;
}

.canvas {
  position: relative;
  flex: 1;
  min-width: 0;
  overflow: hidden;
  background: #585858;
  padding: 62px 0 63px;
  display: flex;
}

.pasteboard {
  flex: 1;
  background: #5e5e5e;
  border-top: 1px solid #777;
  border-bottom: 1px solid #777;
}

.vscroll {
  width: 19px;
}

.spread {
  position: absolute;
  left: 105px;
  top: 123px;
  width: 1020px;
  height: 659px;
  background: #fff;
  outline: 1px solid #333;
  box-shadow: 3px 3px 0 #000;
}

.spine {
  position: absolute;
  left: 510px;
  top: 0;
  bottom: 0;
  width: 1px;
  background: #333;
}

.margin {
  position: absolute;
  top: 29px;
  width: 449px;
  height: 599px;
  border: 1px solid #8646b8;
  border-top-color: #cf62d8;
  border-bottom-color: #cf62d8;
}

.margin.left-page {
  left: 29px;
  border-right: 2px solid #b13cf0;
}

.margin.right-page {
  left: 540px;
}

.guide {
  position: absolute;
  background: #3ae2e6;
}

.guide.v {
  top: 0;
  bottom: 0;
  width: 1px;
}

.guide.h {
  left: 0;
  right: 0;
  height: 1px;
}

.frame {
  position: absolute;
  top: 636px;
  width: 203px;
  height: 14px;
  padding: 1px;
  color: #000;
  font-size: 9px;
  line-height: 10px;
  white-space: nowrap;
  background:
    repeating-linear-gradient(90deg, #b03048 0 1px, transparent 1px 4px) top / 100% 1px no-repeat,
    repeating-linear-gradient(90deg, #b03048 0 1px, transparent 1px 4px) bottom / 100% 1px no-repeat,
    repeating-linear-gradient(#b03048 0 1px, transparent 1px 4px) left / 1px 100% no-repeat,
    repeating-linear-gradient(#b03048 0 1px, transparent 1px 4px) right / 1px 100% no-repeat;
}

.frame.lf {
  left: 50px;
}

.frame.rf {
  left: 765px;
  text-align: right;
}

.context-bar {
  position: absolute;
  left: 689px;
  bottom: 10px;
  width: 492px;
  height: 44px;
  padding-left: 6px;
  display: flex;
  align-items: center;
  background: #525252;
  border-radius: 3px;
  border-top: 1px solid #484848;
  box-sizing: border-box;
}

.handle {
  width: 5px;
  height: 33px;
  border-radius: 3px;
  background: #3e3e3e;
  margin-right: 7px;
}

.ctx {
  display: flex;
  align-items: center;
  gap: 6px;
  height: 35px;
  width: 142px;
  padding: 0 9px;
  margin-right: 6px;
  border: 1px solid #6e6e6e;
  border-radius: 2px;
  background: none;
  color: #f0f0f0;
  font: 14px "Open Sans", sans-serif;
  white-space: nowrap;
}

.ctx.second {
  width: 164px;
  padding: 0 6px;
  gap: 5px;
}

.ctx-icon {
  width: 24px;
  margin-left: 4px;
  margin-right: 12px;
}

/* status bar */
.status {
  display: flex;
  align-items: center;
  height: 18px;
  padding-top: 1px;
  border-top: 1px solid #484848;
  border-bottom: 1px solid #333;
  padding-left: 17px;
}

.drop {
  position: relative;
  display: flex;
  align-items: center;
  height: 18px;
}

.drop select {
  appearance: none;
  width: 100%;
  border: 0;
  padding: 0;
  background: none;
  color: #f0f0f0;
  font: 12px/18px "Open Sans", sans-serif;
}

.drop svg {
  position: absolute;
  right: 0;
  top: 6px;
  pointer-events: none;
}

.zoom {
  width: 64px;
}

.pager {
  display: flex;
  gap: 14px;
  margin-left: 15px;
}

.page-select {
  width: 106px;
  margin-left: 11px;
  padding-left: 4px;
  height: 17px;
  background: linear-gradient(90deg, #454545 88px, #6a6a6a 88px 89px, #454545 89px);
  border: 1px solid #6a6a6a;
  border-bottom: 0;
}

.page-select svg {
  right: 6px;
}

.pager.next {
  margin-left: 15px;
}

.pf {
  margin-left: 20px;
}

.profile {
  margin-left: 15px;
  width: 139px;
}

.errors {
  margin-left: 20px;
  width: 109px;
  gap: 7px;
}

.dot {
  flex: none;
  width: 14px;
  height: 14px;
  border-radius: 50%;
  background: #129412;
}

.hscroll {
  flex: 1;
  display: flex;
  align-items: center;
  gap: 6px;
  height: 18px;
  margin-left: 8px;
  padding: 0 12px 0 6px;
  background: #4a4a4a;
}

.track {
  flex: 1;
}

.thumb {
  height: 18px;
  border-radius: 9px;
  background: #696969;
  margin-left: 20%;
  width: 68%;
}

.split {
  margin: 0 22px 0 0;
}

/* panels */
.panels {
  width: 301px;
  margin-right: 2px;
  display: flex;
  flex-direction: column;
}

.panel {
  background: #535353;
}

.panel-tabs {
  display: flex;
  justify-content: space-between;
  align-items: center;
  height: 34px;
  background: #424242;
  border-bottom: 1px solid #383838;
  box-sizing: border-box;
  padding-right: 7px;
}

.panel-tab {
  display: flex;
  align-items: center;
  gap: 7px;
  height: 34px;
  padding: 0 15px 0 10px;
  background: #535353;
  font-size: 13px;
  font-weight: 700;
}

.layers {
  display: flex;
  flex-direction: column;
  height: 451px;
  margin-bottom: 3px;
}

.layers-body {
  flex: 1;
  display: flex;
  flex-direction: column;
  width: 280px;
  margin: 3px 0 0 2px;
  border-right: 1px solid #5c5c5c;
}

.layer-list {
  list-style: none;
  margin: 0;
  padding: 0;
  height: 166px;
  display: grid;
  grid-auto-rows: 1fr;
  border-top: 1px solid #5e5e5e;
}

.layer-list li {
  display: flex;
  border-bottom: 1px solid #5e5e5e;
}

.eye {
  width: 25px;
  justify-content: center;
  border-right: 1px solid #5e5e5e;
}

.lock {
  width: 26px;
  border-right: 1px solid #5e5e5e;
}

.colour {
  width: 7px;
  padding: 1px 0;
  border-right: 1px solid #5e5e5e;
  display: flex;
}

.colour i {
  width: 4px;
  margin-left: 2px;
}

.layer-name {
  flex: 1;
  display: flex;
  align-items: center;
  gap: 6px;
  padding: 0 12px 0 11px;
}

.layer-name .square {
  width: 7px;
  height: 7px;
  border: 1px solid #000;
}

.layer-name span {
  flex: 1;
}

.pen {
  margin-right: 9px;
}

.selected .layer-name {
  background: #4f6a83;
  font-weight: 700;
}

.layer-space {
  flex: 1;
}

.panel-foot {
  display: flex;
  align-items: center;
  gap: 18px;
  height: 31px;
  padding: 0 11px 0 4px;
}

.panel-foot span {
  flex: 1;
}

.pages {
  flex: 1;
  min-height: 0;
  display: flex;
  flex-direction: column;
  margin-bottom: 2px;
}

.parents {
  height: 112px;
  border-bottom: 3px solid #5e5e5e;
}

.parents div {
  line-height: 18px;
  padding: 10px 0 8px 4px;
}

.parents b {
  display: inline-block;
  width: 60px;
  background: #2d8ceb;
  color: #fff;
}

.thumbs {
  flex: 1;
  min-height: 0;
  overflow: hidden;
  padding-top: 5px;
  border-bottom: 1px solid #4a4a4a;
}

.thumb-row {
  height: 80px;
  display: flex;
  flex-direction: column;
  align-items: flex-end;
}

.thumb-box {
  position: relative;
  height: 59px;
  width: 46px;
  display: flex;
  align-items: center;
  justify-content: flex-end;
}

.thumb-box::after {
  content: "";
  position: absolute;
  left: 36px;
  top: 0;
  bottom: 0;
  width: 1px;
  background: #c0c0c0;
}

.sheet {
  width: 42px;
  height: 44px;
  margin-right: 1px;
  background: #fff;
  border: 1px solid #8a8a8a;
  border-right: 0;
  color: #111;
  line-height: 18px;
  padding-left: 1px;
  box-sizing: content-box;
}

.sheet.single {
  width: 8px;
  padding: 0;
}

.thumb-label {
  padding-right: 3px;
  line-height: 18px;
}

.pages-foot {
  display: flex;
  align-items: center;
  height: 32px;
  padding: 2px 3px 0 7px;
}

.pages-foot span:first-child {
  flex: 1;
}

.pages-foot button {
  margin-right: 18px;
}

.pages-foot button:first-of-type {
  margin-right: 10px;
}

.pages-foot .dim {
  opacity: 0.5;
  margin-right: 8px;
}

.links .panel-tab {
  padding: 0 14px 0 16px;
}

.links {
  margin-bottom: 1px;
}

/* icon dock */
.dock {
  width: 137px;
  margin-right: 1px;
  background: #535353;
}

.dock-group {
  border-bottom: 1px solid #363636;
  padding-bottom: 3px;
  display: flow-root;
}

.dock-item {
  width: 100%;
  height: 35px;
  padding-left: 13px;
  gap: 10px;
  font-size: 14px;
  font-weight: 700;
  white-space: nowrap;
}

.dock-item svg {
  width: 24px;
  height: 22px;
}

.marker {
  position: absolute;
  right: 0;
  top: 354px;
  pointer-events: none;
}

/* taskbar */
.taskbar {
  display: flex;
  height: 50px;
  background: linear-gradient(90deg, #1c1c1c 0, #1f2228 22%, #2c303a 32%, #1f2228 38%, #272a2f 44%, #2c2a30 48%, #46364a 52%, #332e36 56%, #463240 60%, #34333e 65%, #38222a 69%, #42202a 74%, #3c1b22 80%, #2a1a1c 88%, #1c1c1c 92%);
}

.start {
  width: 60px;
  justify-content: center;
}

.search {
  width: 360px;
  height: 49px;
  box-sizing: border-box;
  display: flex;
  align-items: center;
  padding-left: 14px;
  background: #f3f3f3;
  border: 1px solid #c8c8c8;
}

.search input {
  flex: 1;
  min-width: 0;
  border: 0;
  padding: 0 0 0 13px;
  background: none;
  font: 18px "Open Sans", sans-serif;
  color: #222;
}

.search input::placeholder {
  color: #333;
  opacity: 1;
}

.blossom {
  margin-right: 4px;
}

.app-btn {
  width: 62px;
  justify-content: center;
  box-sizing: border-box;
  border-bottom: 3px solid transparent;
}

.app-btn.open {
  width: 52px;
  margin: 0 5px;
  border-color: #76b0e0;
}

.app-btn.tCloud {
  margin-left: 6px;
}

.app-btn.current {
  background: #4b4e53;
  border-color: #76b0e0;
}

.app-btn.tId svg {
  display: none;
}

.id-logo.small {
  width: 28px;
  height: 26px;
  border-radius: 4px;
  font-size: 15px;
  line-height: 24px;
}

.tray {
  display: flex;
  margin-left: auto;
}

.weather {
  font-size: 17px;
  gap: 9px;
  color: #fff;
  margin-right: 24px;
}

.tray-icon {
  width: 40px;
  justify-content: center;
}

.clock {
  flex-direction: column;
  justify-content: center;
  width: 80px;
  font-size: 14px;
  line-height: 23px;
  color: #fff;
}

.notif {
  position: relative;
  padding: 0 22px 0 18px;
  border-right: 1px solid #777;
  margin-right: 6px;
}

.badge {
  position: absolute;
  right: 14px;
  bottom: 3px;
  width: 18px;
  height: 18px;
  border: 1px solid #999;
  border-radius: 50%;
  background: #2a2a2a;
  font-size: 12px;
  font-weight: 700;
  line-height: 18px;
}
</style>
